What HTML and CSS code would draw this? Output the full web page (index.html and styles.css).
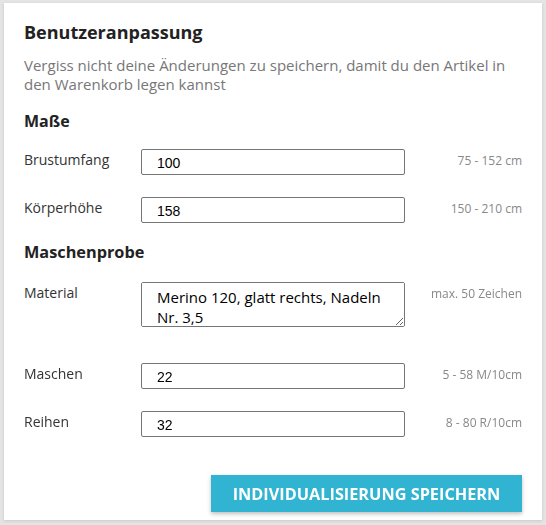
FILE: index.html
```html
<!DOCTYPE html>
<html lang="de">
<head>
    <meta charset="UTF-8">
    <meta name="viewport" content="width=device-width, initial-scale=1.0">
    <title>Benutzeranpassung</title>
    <link rel="stylesheet" href="styles.css">
</head>
<body>
    <div class="custom-card">
        <h1 class="custom-title">Benutzeranpassung</h1>
        <p class="custom-note">Vergiss nicht deine Änderungen zu speichern, damit du den Artikel in den Warenkorb legen kannst</p>

        <h2 class="section-title">Maße</h2>
        <div class="field-row">
            <label for="chest">Brustumfang</label>
            <input type="text" id="chest" value="100">
            <span class="hint">75 - 152 cm</span>
        </div>
        <div class="field-row">
            <label for="height">Körperhöhe</label>
            <input type="text" id="height" value="158">
            <span class="hint">150 - 210 cm</span>
        </div>

        <h2 class="section-title section-gauge">Maschenprobe</h2>
        <div class="field-row field-area">
            <label for="material">Material</label>
            <textarea id="material" rows="2">Merino 120, glatt rechts, Nadeln Nr. 3,5</textarea>
            <span class="hint">max. 50 Zeichen</span>
        </div>
        <div class="field-row">
            <label for="stitches">Maschen</label>
            <input type="text" id="stitches" value="22">
            <span class="hint">5 - 58 M/10cm</span>
        </div>
        <div class="field-row">
            <label for="rows">Reihen</label>
            <input type="text" id="rows" value="32">
            <span class="hint">8 - 80 R/10cm</span>
        </div>

        <div class="actions">
            <button type="button" class="save-btn">Individualisierung speichern</button>
        </div>
    </div>
</body>
</html>
```

FILE: styles.css
```css
* {
    margin: 0;
    padding: 0;
    box-sizing: border-box;
}

body {
    background-color: #e4e4e4;
    padding: 3px 4px 5px 4px;
    font-family: "Open Sans", "Noto Sans", sans-serif;
    color: #222;
}

.custom-card {
    background-color: #fff;
    box-shadow: 0 1px 3px rgba(0, 0, 0, 0.12);
    padding: 17px 20px 8px 20px;
    height: 517px;
}

.custom-title {
    font-size: 18px;
    font-weight: 700;
    line-height: 24px;
    color: #222;
    margin-bottom: 12px;
}

.custom-note {
    font-size: 15px;
    line-height: 19px;
    color: #777;
    margin-bottom: 16px;
}

.section-title {
    font-size: 16px;
    font-weight: 700;
    line-height: 22px;
    color: #222;
    margin-bottom: 17px;
}

.section-gauge {
    font-size: 16.3px;
    margin-top: -4px;
    margin-bottom: 19px;
}

.field-row {
    display: grid;
    grid-template-columns: 117px 264px 1fr;
    align-items: start;
    margin-bottom: 22px;
}

.field-area {
    margin-bottom: 36px;
}

.field-row label {
    font-size: 14px;
    line-height: 20px;
    color: #333;
    padding-top: 1px;
}

.field-row input,
.field-row textarea {
    width: 264px;
    height: 26px;
    border: 1px solid #767676;
    border-radius: 2px;
    padding: 1px 15px 0 15px;
    font-family: "Liberation Sans", Arial, sans-serif;
    font-size: 14px;
    color: #000;
    background-color: #fff;
}

.field-row textarea {
    height: 45px;
    padding: 4px 8px 0 15px;
    font-family: "Open Sans", "Noto Sans", sans-serif;
    font-size: 15px;
    line-height: 20px;
    resize: vertical;
}

.hint {
    text-align: right;
    font-size: 12px;
    line-height: 18px;
    color: #888;
    padding-top: 3px;
}

.actions {
    display: flex;
    justify-content: flex-end;
    margin-top: 38px;
}

.save-btn {
    width: 311px;
    height: 37px;
    background-color: #30b4d2;
    color: #fff;
    border: none;
    font-family: "Open Sans", "Noto Sans", sans-serif;
    font-size: 16.3px;
    font-weight: 700;
    text-transform: uppercase;
    box-shadow: 0 2px 4px rgba(0, 0, 0, 0.25);
    cursor: pointer;
}
```
